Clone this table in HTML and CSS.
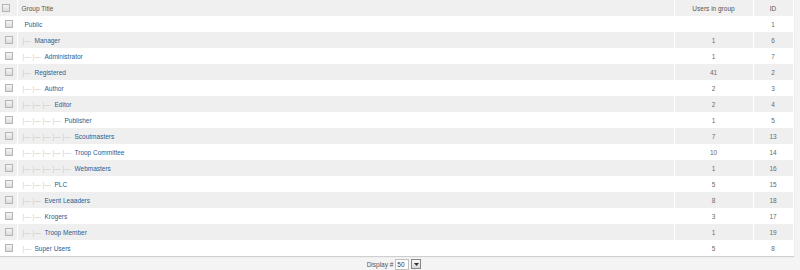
FILE: index.html
```html
<!DOCTYPE html>
<html>
<head>
<meta charset="utf-8">
<link rel="stylesheet" href="styles.css">
</head>
<body>
<div class="page">
<table class="list">
<thead>
<tr>
<th class="c-check"><span class="cb"></span></th>
<th class="c-title">Group Title</th>
<th class="c-users">Users in group</th>
<th class="c-id">ID</th>
</tr>
</thead>
<tbody>
<tr class="r0"><td class="c-check"><span class="cb"></span></td><td class="c-title"><a>Public</a></td><td class="c-users"></td><td class="c-id">1</td></tr>
<tr class="r1"><td class="c-check"><span class="cb"></span></td><td class="c-title"><span class="gi">|&mdash;</span><a>Manager</a></td><td class="c-users">1</td><td class="c-id">6</td></tr>
<tr class="r0"><td class="c-check"><span class="cb"></span></td><td class="c-title"><span class="gi">|&mdash;</span><span class="gi">|&mdash;</span><a>Administrator</a></td><td class="c-users">1</td><td class="c-id">7</td></tr>
<tr class="r1"><td class="c-check"><span class="cb"></span></td><td class="c-title"><span class="gi">|&mdash;</span><a>Registered</a></td><td class="c-users">41</td><td class="c-id">2</td></tr>
<tr class="r0"><td class="c-check"><span class="cb"></span></td><td class="c-title"><span class="gi">|&mdash;</span><span class="gi">|&mdash;</span><a>Author</a></td><td class="c-users">2</td><td class="c-id">3</td></tr>
<tr class="r1"><td class="c-check"><span class="cb"></span></td><td class="c-title"><span class="gi">|&mdash;</span><span class="gi">|&mdash;</span><span class="gi">|&mdash;</span><a>Editor</a></td><td class="c-users">2</td><td class="c-id">4</td></tr>
<tr class="r0"><td class="c-check"><span class="cb"></span></td><td class="c-title"><span class="gi">|&mdash;</span><span class="gi">|&mdash;</span><span class="gi">|&mdash;</span><span class="gi">|&mdash;</span><a>Publisher</a></td><td class="c-users">1</td><td class="c-id">5</td></tr>
<tr class="r1"><td class="c-check"><span class="cb"></span></td><td class="c-title"><span class="gi">|&mdash;</span><span class="gi">|&mdash;</span><span class="gi">|&mdash;</span><span class="gi">|&mdash;</span><span class="gi">|&mdash;</span><a>Scoutmasters</a></td><td class="c-users">7</td><td class="c-id">13</td></tr>
<tr class="r0"><td class="c-check"><span class="cb"></span></td><td class="c-title"><span class="gi">|&mdash;</span><span class="gi">|&mdash;</span><span class="gi">|&mdash;</span><span class="gi">|&mdash;</span><span class="gi">|&mdash;</span><a>Troop Committee</a></td><td class="c-users">10</td><td class="c-id">14</td></tr>
<tr class="r1"><td class="c-check"><span class="cb"></span></td><td class="c-title"><span class="gi">|&mdash;</span><span class="gi">|&mdash;</span><span class="gi">|&mdash;</span><span class="gi">|&mdash;</span><span class="gi">|&mdash;</span><a>Webmasters</a></td><td class="c-users">1</td><td class="c-id">16</td></tr>
<tr class="r0"><td class="c-check"><span class="cb"></span></td><td class="c-title"><span class="gi">|&mdash;</span><span class="gi">|&mdash;</span><span class="gi">|&mdash;</span><a>PLC</a></td><td class="c-users">5</td><td class="c-id">15</td></tr>
<tr class="r1"><td class="c-check"><span class="cb"></span></td><td class="c-title"><span class="gi">|&mdash;</span><span class="gi">|&mdash;</span><a>Event Leaaders</a></td><td class="c-users">8</td><td class="c-id">18</td></tr>
<tr class="r0"><td class="c-check"><span class="cb"></span></td><td class="c-title"><span class="gi">|&mdash;</span><span class="gi">|&mdash;</span><a>Krogers</a></td><td class="c-users">3</td><td class="c-id">17</td></tr>
<tr class="r1"><td class="c-check"><span class="cb"></span></td><td class="c-title"><span class="gi">|&mdash;</span><span class="gi">|&mdash;</span><a>Troop Member</a></td><td class="c-users">1</td><td class="c-id">19</td></tr>
<tr class="r0"><td class="c-check"><span class="cb"></span></td><td class="c-title"><span class="gi">|&mdash;</span><a>Super Users</a></td><td class="c-users">5</td><td class="c-id">8</td></tr>
</tbody>
</table>
<div class="footer">
<span class="lbl">Display #</span>
<span class="sel">50</span>
<span class="btn"><svg width="5" height="3" viewBox="0 0 5 3"><path d="M0 0H5L2.5 3Z" fill="#333"/></svg></span>
</div>
</div>
</body>
</html>
```
FILE: styles.css
```css
html, body {
  margin: 0;
  padding: 0;
  background: #f4f4f4;
}
.page {
  width: 800px;
  height: 270px;
  font-family: "Liberation Sans", Arial, sans-serif;
  font-size: 6.5px;
  color: #666;
}
.list {
  width: 793px;
  border-collapse: collapse;
  table-layout: fixed;
  background: #fff;
  box-shadow: 0 1px 1px #cfcfcf;
}
.list th, .list td {
  height: 16px;
  padding: 0 4px;
  border-right: 1px solid #fff;
  border-bottom: 0;
  box-sizing: border-box;
  white-space: nowrap;
  vertical-align: middle;
  color: #6a6a6a;
}
.list th {
  background: #f0f0f0;
  font-weight: normal;
  color: #555;
  text-align: left;
}
.list tr.r1 td {
  background: #efefef;
}
.list tr.r0 td {
  background: #fff;
}
.c-check {
  width: 17px;
  text-align: center;
  padding: 0 !important;
}
.c-title {
  width: 657px;
}
.list th.c-title {
  padding-left: 4px;
}
.list td.c-title {
  padding-left: 5px;
}
.c-users {
  width: 79px;
  text-align: center !important;
}
.c-id {
  width: 40px;
  text-align: center !important;
}
.cb {
  display: inline-block;
  width: 6px;
  height: 6px;
  border: 1px solid #b5b5b5;
  background: linear-gradient(#f4f4f4, #dcdcdc);
  vertical-align: middle;
  margin-left: 2px;
}
.list td .gi {
  display: inline-block;
  width: 10px;
  color: #c8c8c8;
}
.list td.c-title a {
  color: #2a5d8f;
  margin-left: 2px;
}
.footer {
  height: 14px;
  display: flex;
  align-items: center;
  justify-content: center;
  margin-top: 1px;
  color: #555;
}
.lbl {
  margin-right: 2px;
  margin-left: -12px;
}
.sel {
  display: inline-block;
  width: 11px;
  height: 9px;
  line-height: 9px;
  padding-left: 1px;
  background: #fff;
  border: 1px solid #c0c0c0;
  color: #333;
}
.btn {
  display: inline-flex;
  align-items: center;
  justify-content: center;
  width: 8px;
  height: 8px;
  margin-left: 2px;
  border: 1px solid #888;
  background: linear-gradient(#fafafa, #d8d8d8);
}
```
